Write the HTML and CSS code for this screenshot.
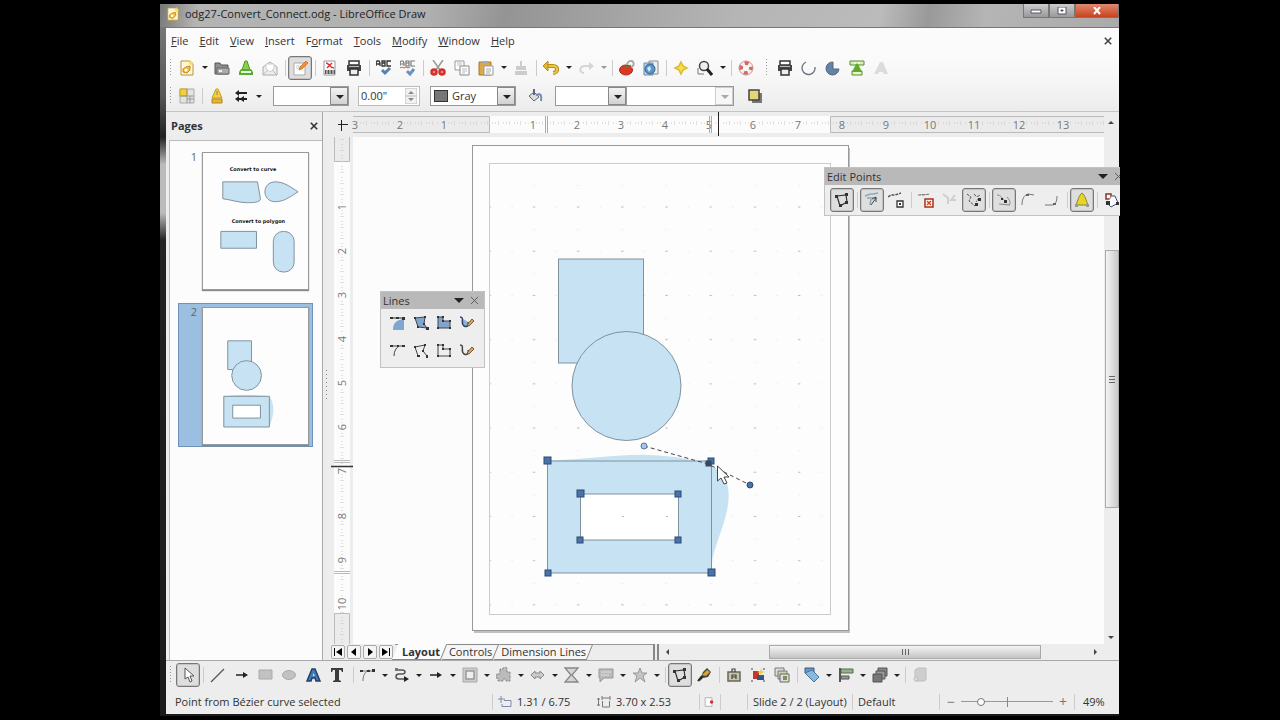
FILE: index.html
```html
<!DOCTYPE html>
<html lang="en">

<head>
    <meta charset="utf-8">
    <meta name="viewport" content="width=device-width, initial-scale=1.0">
    <title>odg27-Convert_Connect.odg - LibreOffice Draw</title>
    <link rel="stylesheet" href="styles.css">
</head>

<body>
    <svg class="defs" aria-hidden="true">
        <symbol id="i-points" viewBox="0 0 16 16">
            <path d="M3 4L12 3L13 10L6 14Z" fill="none" stroke="#333" stroke-width="1.2" />
            <path d="M1 3h3v3H1zM11 1h3v3h-3zM11 9h3v3h-3zM5 12h3v3H5z" fill="#333" />
        </symbol>
        <symbol id="i-print" viewBox="0 0 16 16">
            <path d="M3 1h10v4H3z" fill="#fff" stroke="#333" stroke-width="1.5" />
            <path d="M1 5h14v6H1z" fill="#444" />
            <path d="M3 6h10v1H3z" fill="#bbb" />
            <path d="M4 9h8v6H4z" fill="#eee" stroke="#333" stroke-width="1.5" />
        </symbol>
        <symbol id="i-doc" viewBox="0 0 16 16">
            <path d="M2 1h9l3 3v11H2z" fill="#fff8d8" stroke="#b89433" />
            <path d="M4 12V9l3-2 4-1v4l-3 3z" fill="#f0c040" stroke="#c98a14" />
            <circle cx="7" cy="10" r="1.5" fill="#fff" />
            <path d="M12 0l1 2 2 1-2 1-1 2-1-2-2-1 2-1z" fill="#ffd95a" />
        </symbol>
        <symbol id="i-close" viewBox="0 0 10 10">
            <path d="M1 1L9 9M9 1L1 9" fill="none" stroke="currentColor" />
        </symbol>
    </svg>

    <div class="window">
        <header class="titlebar">
            <svg class="doc-icon"><use href="#i-doc" /></svg>
            <span class="title">odg27-Convert_Connect.odg - LibreOffice Draw</span>
            <div class="controls">
                <button title="Minimize"><svg viewBox="0 0 12 8"><path d="M1 3h10v3H1z" fill="#fff" stroke="#556" /></svg></button>
                <button title="Maximize"><svg viewBox="0 0 12 8"><path d="M2 0h8v7H2z" fill="#fff" stroke="#556" /><path d="M5 3h2v1H5z" stroke="#556" /></svg></button>
                <button class="close" title="Close"><svg viewBox="0 0 12 8"><path d="M3 0L9 7M9 0L3 7" stroke="#fff" stroke-width="2" /></svg></button>
            </div>
        </header>

        <div class="frame">
            <nav class="menu">
                <a href="#"><u>F</u>ile</a>
                <a href="#"><u>E</u>dit</a>
                <a href="#"><u>V</u>iew</a>
                <a href="#"><u>I</u>nsert</a>
                <a href="#">F<u>o</u>rmat</a>
                <a href="#"><u>T</u>ools</a>
                <a href="#"><u>M</u>odify</a>
                <a href="#"><u>W</u>indow</a>
                <a href="#"><u>H</u>elp</a>
                <button class="close-doc" title="Close Document"><svg><use href="#i-close" /></svg></button>
            </nav>

            <div class="toolbar standard">
                <i class="grip"></i>
                <button class="tool" title="New"><svg><use href="#i-doc" /></svg></button>
                <button class="drop" title="New options"></button>
                <button class="tool" title="Open"><svg viewBox="0 0 16 16"><path d="M1 3h5l1 2h7v9H1z" fill="#8c908c" stroke="#555" /><path d="M3 8h12v6H3z" fill="#a9ada6" stroke="#666" /><path d="M5 10h3v2H5z" fill="#eee" /></svg></button>
                <button class="tool" title="Save"><svg viewBox="0 0 16 16"><path d="M7 1h2l3 9H4z" fill="#8bd04b" stroke="#4b9a1e" /><path d="M3 9L1 12v3h14v-3l-2-3z" fill="#5daa2c" /><path d="M3 12h10" stroke="#dfe" stroke-width="2" /></svg></button>
                <button class="tool" title="E-mail"><svg viewBox="0 0 16 16"><path d="M1 7l7-5 7 5v8H1z" fill="#eee" stroke="#aaa" /><path d="M4 4h8v5l-4 3-4-3z" fill="#fff" stroke="#ccc" /><path d="M1 15l5-5M15 15l-5-5" stroke="#bbb" /></svg></button>
                <i class="sep"></i>
                <button class="tool on" title="Edit File"><svg viewBox="0 0 16 16"><path d="M2 3h11v12H2z" fill="#fff" stroke="#aaa" /><path d="M4 6h5M4 8h4" stroke="#ccc" /><path d="M7 10l1-3 6-6 2 2-6 6z" fill="#f09030" stroke="#b05c10" stroke-width=".6" /></svg></button>
                <i class="sep"></i>
                <button class="tool" title="Export as PDF"><svg viewBox="0 0 16 16"><path d="M2 1h11v14H2z" fill="#fff" stroke="#999" /><path d="M4 3c3 0 4 5 8 5M5 8l5-5" fill="none" stroke="#d33" stroke-width="1.5" /><path d="M3 10h10v4H3z" fill="#555" /><path d="M5 10v4M8 10v4M11 10v4" stroke="#eee" /></svg></button>
                <button class="tool" title="Print"><svg><use href="#i-print" /></svg></button>
                <i class="sep"></i>
                <button class="tool" title="Spelling"><svg viewBox="0 0 16 16"><path d="M0 6V3l1-2h2l1 2v3M0 4h4M6 1v5h3V1zM6 3h3M15 1h-4v5h4" fill="none" stroke="#333" stroke-width="1.3" /><path d="M6 10l3 3 5-5" fill="none" stroke="#5580b0" stroke-width="3" /></svg></button>
                <button class="tool" title="AutoSpellcheck"><svg viewBox="0 0 16 16"><path d="M0 6V3l1-2h2l1 2v3M0 4h4M6 1v5h3V1zM6 3h3M15 1h-4v5h4" fill="none" stroke="#777" stroke-width="1.2" /><path d="M0 8l2-1 2 1 2-1 2 1 2-1" fill="none" stroke="#d55" /><path d="M7 11l3 3 4-5" fill="none" stroke="#6a92bf" stroke-width="3" /></svg></button>
                <i class="sep"></i>
                <button class="tool" title="Cut"><svg viewBox="0 0 16 16"><path d="M3 0l7 10M13 0L6 10" stroke="#999" stroke-width="1.5" /><circle cx="4" cy="12" r="2.5" fill="#e88" stroke="#d2312b" stroke-width="2.5" /><circle cx="12" cy="12" r="2.5" fill="#e88" stroke="#d2312b" stroke-width="2.5" /></svg></button>
                <button class="tool" title="Copy"><svg viewBox="0 0 16 16"><path d="M1 1h9v9H1z" fill="#fff" stroke="#999" /><path d="M6 6h9v9H6z" fill="#fff" stroke="#888" /><path d="M3 3h5M3 5h5M8 9h5M8 11h5M8 13h3" stroke="#bbb" /></svg></button>
                <button class="tool" title="Paste"><svg viewBox="0 0 16 16"><path d="M1 2h12v13H1z" fill="#d9a94b" stroke="#a9782a" /><path d="M4 1h6v3H4z" fill="#aaa" /><path d="M6 6h9v9H6z" fill="#fff" stroke="#999" /><path d="M8 9h5M8 11h5M8 13h4" stroke="#aaa" /></svg></button>
                <button class="drop" title="Paste options"></button>
                <button class="tool off" title="Format Paintbrush"><svg viewBox="0 0 16 16"><path d="M7 1h2v5h4v4H3V6h4zM2 11h12v4H2z" fill="#999" /></svg></button>
                <i class="sep"></i>
                <button class="tool" title="Undo"><svg viewBox="0 0 16 16"><path d="M3 6h7c6 0 5 7 0 7" fill="none" stroke="#b88d15" stroke-width="4" /><path d="M3 6h7c6 0 5 7 0 7" fill="none" stroke="#edc743" stroke-width="2" /><path d="M0 6l5-5v10z" fill="#e1b62c" stroke="#b88d15" /></svg></button>
                <button class="drop" title="Undo history"></button>
                <button class="tool off" title="Redo"><svg viewBox="0 0 16 16"><path d="M13 6H7c-6 0-6 7-1 7" fill="none" stroke="#aaa" stroke-width="2" /><path d="M16 6l-5-4v8z" fill="#aaa" /></svg></button>
                <button class="drop off" title="Redo history"></button>
                <i class="sep"></i>
                <button class="tool" title="Chart"><svg viewBox="0 0 16 16"><ellipse cx="7" cy="10" rx="6.5" ry="5" fill="#dd3826" stroke="#a7271a" /><path d="M8 5c0-3 4-6 6-3s-1 5-2 5" fill="none" stroke="#aaa" stroke-width="2" /><path d="M5 5l3 2 4-2" stroke="#4b8a2c" fill="none" /></svg></button>
                <button class="tool" title="Hyperlink"><svg viewBox="0 0 16 16"><path d="M6 1h9v13H6z" fill="#eee" stroke="#889" /><path d="M1 3h9v12H1z" fill="#b8d2ea" stroke="#6b8cab" /><circle cx="7" cy="9" r="5" fill="#5b94c8" stroke="#31648f" /><path d="M4 8l3-2 1 3-2 3z" fill="#d5e8f5" /></svg></button>
                <i class="sep"></i>
                <button class="tool" title="Navigator"><svg viewBox="0 0 16 16"><path d="M8 2l2 4 4 2-4 2-2 4-2-4-4-2 4-2z" fill="#f7dd4a" stroke="#dabb2c" stroke-width="1.5" /></svg></button>
                <button class="tool" title="Zoom"><svg viewBox="0 0 16 16"><path d="M1 8v6h6" stroke="#777" fill="none" /><circle cx="7" cy="6" r="4.5" fill="#eee" stroke="#444" stroke-width="1.5" /><path d="M10 9l5 6" stroke="#222" stroke-width="3" /></svg></button>
                <button class="drop" title="Zoom options"></button>
                <i class="sep"></i>
                <button class="tool" title="Help"><svg viewBox="0 0 16 16"><circle cx="8" cy="8" r="5" fill="none" stroke="#f3efef" stroke-width="4" /><circle cx="8" cy="8" r="5" fill="none" stroke="#d86860" stroke-width="4" stroke-dasharray="4 3.850" stroke-dashoffset="2" /><circle cx="8" cy="8" r="7" fill="none" stroke="#c99" /></svg></button>
                <i class="grip wide"></i>
                <button class="tool" title="Print Directly"><svg><use href="#i-print" /></svg></button>
                <button class="tool" title="Arc"><svg viewBox="0 0 16 16"><path d="M5 2a6.500 6.500 0 1 0 9 5" fill="none" stroke="#69727f" stroke-width="1.3" /></svg></button>
                <button class="tool" title="Ellipse Pie"><svg viewBox="0 0 16 16"><path d="M8 2a6.500 6.500 0 1 0 6 7H8z" fill="#6482a8" stroke="#55677d" /></svg></button>
                <button class="tool" title="Load Graphic"><svg viewBox="0 0 16 16"><path d="M1 1h14v4H1zM3 11h10v4H3z" fill="#d5f0b5" stroke="#57912e" /><path d="M8 2l5 10H3z" fill="#62aa2b" /><path d="M5 3h6M5 13h6" stroke="#fff" /></svg></button>
                <button class="tool off" title="Fontwork"><svg viewBox="0 0 16 16"><path d="M1 14L7 2h3l5 12h-4l-1-2H6l-1 2z" fill="#bbb" /></svg></button>
            </div>

            <div class="toolbar line-fill">
                <i class="grip"></i>
                <button class="tool" title="Styles"><svg viewBox="0 0 16 16"><path d="M1 1h14v14H1z" fill="#e3e3e3" stroke="#aaa" /><path d="M1 1h7v7H1z" fill="#f5cf35" stroke="#c9a520" /><path d="M8 1v14M1 8h14M11 8v7M8 11h7" stroke="#999" /></svg></button>
                <i class="sep"></i>
                <button class="tool" title="Line"><svg viewBox="0 0 16 16"><path d="M7 1h2l4 9H3z" fill="#f6cf3a" stroke="#c79d1c" /><path d="M8 3v4" stroke="#887" /><path d="M3 11h10v4H3z" fill="#e4b732" stroke="#b4871a" /></svg></button>
                <button class="tool" title="Arrow Style"><svg viewBox="0 0 16 16"><path d="M2 5l4-3v2h8v2H6v2zM2 11l4-3v2h2l3-2v2h3v2h-3v2l-3-2H6v2z" fill="#222" /></svg></button>
                <button class="drop" title="Arrow options"></button>
                <span class="combo line-style"><select aria-label="Line Style"><option></option></select></span>
                <span class="spin"><input type="text" aria-label="Line Width" value="0.00&quot;"><svg viewBox="0 0 12 16"><path d="M0 0h12v16H0zM0 8h12" fill="#f1f1f1" stroke="#bbb" /><path d="M3 6l3-3 3 3zM3 10l3 3 3-3z" fill="#888" /></svg></span>
                <span class="combo color"><i class="swatch"></i><select aria-label="Line Color"><option>Gray</option></select></span>
                <button class="tool area" title="Area"><svg viewBox="0 0 16 16"><path d="M2 8l5-4 5 5-5 4z" fill="#ddd" stroke="#667" /><path d="M7 7V1" stroke="#667" stroke-width="2" /><path d="M9 7c5-2 6 1 5 6" fill="none" stroke="#7686b8" stroke-width="2" /></svg></button>
                <span class="combo fill-type"><select aria-label="Area Style"><option></option></select></span>
                <span class="combo fill-value"><select aria-label="Area Filling" disabled><option></option></select></span>
                <button class="tool shadow" title="Shadow"><svg viewBox="0 0 16 16"><path d="M5 5h10v10H5z" fill="#777" /><path d="M2 2h10v10H2z" fill="#e3d674" stroke="#444" stroke-width="1.5" /></svg></button>
            </div>

            <main class="main">
                <aside class="pages">
                    <div class="pages-head">Pages <button title="Close Pane"><svg><use href="#i-close" /></svg></button></div>
                    <div class="pages-list">
                        <div class="page-item">
                            <span>1</span>
                            <svg class="thumb" viewBox="0 0 106 137">
                                <text x="27" y="18">Convert to curve</text>
                                <path d="M20 29H55L58 46C58 50 50 50 44 50C36 50 28 47 20 46Z" />
                                <path d="M96 39C88 34 82 29 73 29C59 29 59 49 73 49C82 49 88 44 96 39Z" />
                                <text x="29" y="71">Convert to polygon</text>
                                <path d="M18 79H54V96H18Z" />
                                <rect x="71" y="79" width="21" height="41" rx="10" />
                            </svg>
                        </div>
                        <div class="page-item selected">
                            <span>2</span>
                            <svg class="thumb" viewBox="0 0 106 137">
                                <path d="M25 33H49V62H25Z" />
                                <circle cx="44" cy="68" r="15" />
                                <path d="M21 89Q45 86 67 89Q75 100 67 120Z" class="soft" />
                                <path d="M21 89H67V120H21Z" />
                                <path d="M30 98H58V111H30Z" class="hole" />
                            </svg>
                        </div>
                    </div>
                </aside>
                <div class="splitter"></div>

                <section class="workspace">
                    <svg class="ruler-h">
                        <defs>
                            <pattern id="ticks-h" x="4" width="11" height="22" patternUnits="userSpaceOnUse">
                                <path d="M3 11h1M6 11h1M9 10h1M9 12h1" stroke="#c4c4c4" />
                            </pattern>
                        </defs>
                        <rect x="22" y="4" width="100%" height="17" class="active" />
                        <path d="M22 4.500H158.500V20.500H22" class="dim" />
                        <svg x="499" width="274" height="30"><path d="M.5 4.500H1400V20.500H.5Z" class="dim" /></svg>
                        <rect x="22" y="1" width="751" height="22" fill="url(#ticks-h)" />
                        <path d="M7 12.500H17M10.500 8V19" class="cross" />
                        <g class="nums">
                            <g class="outside">
                                <text x="24" y="17">3</text>
                                <text x="69" y="17">2</text>
                                <text x="113" y="17">1</text>
                            </g>
                            <text x="202" y="17">1</text>
                            <text x="246" y="17">2</text>
                            <text x="290" y="17">3</text>
                            <text x="334" y="17">4</text>
                            <text x="378" y="17">5</text>
                            <text x="422" y="17">6</text>
                            <text x="467" y="17">7</text>
                            <g class="outside">
                                <text x="511" y="17">8</text>
                                <text x="555" y="17">9</text>
                                <text x="599" y="17">10</text>
                                <text x="643" y="17">11</text>
                                <text x="688" y="17">12</text>
                                <text x="732" y="17">13</text>
                            </g>
                        </g>
                        <path d="M214.500 4V21M216.500 4V21M378.500 4V21M380.500 4V21" stroke="#aaa" />
                        <path d="M387.500 0V24" stroke="#222" />
                    </svg>

                    <div class="view">
                        <svg class="ruler-v">
                            <defs>
                                <pattern id="ticks-v" y="4" width="22" height="11" patternUnits="userSpaceOnUse">
                                    <path d="M11 3v1M11 6v1M10 9v1M12 9v1" stroke="#c4c4c4" />
                                </pattern>
                            </defs>
                            <rect x="3" y="0" width="16" height="100%" class="active" />
                            <path d="M3.500 0V24.500H18.500V0" class="dim" />
                            <path d="M3.500 520V476.500H18.500V520" class="dim" />
                            <rect width="22" height="100%" fill="url(#ticks-v)" />
                            <g class="nums">
                                <text transform="translate(15 70) rotate(-90)">1</text>
                                <text transform="translate(15 114) rotate(-90)">2</text>
                                <text transform="translate(15 158) rotate(-90)">3</text>
                                <text transform="translate(15 202) rotate(-90)">4</text>
                                <text transform="translate(15 246) rotate(-90)">5</text>
                                <text transform="translate(15 290) rotate(-90)">6</text>
                                <text transform="translate(15 334) rotate(-90)">7</text>
                                <text transform="translate(15 379) rotate(-90)">8</text>
                                <text transform="translate(15 423) rotate(-90)">9</text>
                                <text transform="translate(15 467) rotate(-90)">10</text>
                            </g>
                            <path d="M3 323.500H19M3 325.500H19M3 434.500H19M3 436.500H19" stroke="#bbb" />
                            <path d="M0 329.500H22" stroke="#333" stroke-width="1.5" />
                        </svg>

                        <svg class="canvas">
                            <defs>
                                <pattern id="grid" x="40" y="40" width="44.2" height="44.2" patternUnits="userSpaceOnUse">
                                    <path d="M21 22h2" stroke="#aaa" />
                                    <path d="M21 .5h2M0 22h1M43 22h1" stroke="#ececec" />
                                </pattern>
                            </defs>
                            <g transform="translate(119 8)">
                                <rect x="2" y="3" width="376" height="485" fill="#c0c0c0" />
                                <rect x=".5" y=".5" width="376" height="485" fill="#fdfdfd" stroke="#999" />
                                <rect x="18" y="18" width="340" height="451" fill="url(#grid)" />
                                <rect x="17.500" y="18.500" width="341" height="451" fill="none" stroke="#ccc" />
                                <g class="shape">
                                    <rect x="86.500" y="114" width="85" height="104" />
                                    <circle cx="154.500" cy="241" r="54.500" />
                                    <path d="M75 316C115 314 150 309 176 310C206 311 232 316 247 325C260 337 258 358 252 377C247 394 239 410 239 428H75Z" class="soft" />
                                    <path d="M75.500 316H239.500V428H75.500Z" />
                                    <rect x="108.500" y="349" width="98" height="46" class="hole" />
                                </g>
                                <path d="M150 371.500h2M194 371.500h2" stroke="#bbb" />
                                <path d="M172 301L236 319L278 340" class="tangent" />
                                <g class="handles">
                                    <rect x="72" y="312" width="7" height="7" />
                                    <rect x="236" y="313" width="6" height="6" />
                                    <rect x="73" y="425" width="6" height="6" />
                                    <rect x="236" y="424" width="7" height="7" />
                                    <rect x="105" y="345" width="7" height="7" />
                                    <rect x="203" y="346" width="6" height="6" />
                                    <rect x="105" y="392" width="6" height="6" />
                                    <rect x="203" y="392" width="6" height="6" />
                                    <rect x="234" y="316" width="5" height="5" class="node" />
                                    <circle cx="172" cy="301" r="3" class="light" />
                                    <circle cx="278" cy="340" r="3" />
                                </g>
                                <path d="M245.500 321V336L249 333L252 339L255 338L252 332H257Z" fill="#fff" stroke="#444" />
                            </g>
                        </svg>

                        <div class="scroll-v">
                            <button class="up" title="Scroll up"></button>
                            <div class="track"><div class="thumb-v"></div></div>
                            <button class="down" title="Scroll down"></button>
                        </div>
                    </div>

                    <div class="bottom-row">
                        <div class="tab-nav">
                            <button title="First"><svg viewBox="0 0 10 10"><path d="M1 1h1v8H1zM9 1v8L3 5z" /></svg></button>
                            <button title="Previous"><svg viewBox="0 0 10 10"><path d="M7 1v8L2 5z" /></svg></button>
                            <button title="Next"><svg viewBox="0 0 10 10"><path d="M3 1v8l5-4z" /></svg></button>
                            <button title="Last"><svg viewBox="0 0 10 10"><path d="M8 1h1v8H8zM1 1v8l6-4z" /></svg></button>
                        </div>
                        <div class="tabs">
                            <button class="tab current">Layout</button>
                            <button class="tab">Controls</button>
                            <button class="tab">Dimension Lines</button>
                        </div>
                        <div class="scroll-h">
                            <button class="left" title="Scroll left"></button>
                            <div class="track"><div class="thumb-h"></div></div>
                            <button class="right" title="Scroll right"></button>
                        </div>
                    </div>

                    <div class="palette lines">
                        <div class="palette-head">Lines <button class="drop" title="Lines menu"></button><button class="x" title="Close"><svg><use href="#i-close" /></svg></button></div>
                        <div class="palette-grid">
                            <button class="tool" title="Curve, Filled"><svg viewBox="0 0 16 16"><path d="M3 15C3 8 6 5 14 4v11z" fill="#7fa5d1" /><path d="M1 3h13" stroke="#333" /><path d="M0 2h3v2H0zM6 2h3v2H6zM12 2h3v3h-3z" fill="#333" /></svg></button>
                            <button class="tool" title="Polygon, Filled"><svg viewBox="0 0 16 16"><path d="M2 3L12 2L11 9L14 13L5 12Z" fill="#7fa5d1" stroke="#444" /><path d="M1 2h2v2H1zM11 1h2v2h-2zM10 8h2v2h-2zM13 12h3v3h-3zM4 11h2v2H4z" fill="#333" /></svg></button>
                            <button class="tool" title="Polygon (45°), Filled"><svg viewBox="0 0 16 16"><path d="M2 2h5v4h7v7H2z" fill="#7fa5d1" stroke="#444" /><path d="M1 1h2v2H1zM6 1h2v2H6zM6 5h2v2H6zM13 5h2v2h-2zM1 12h2v2H1zM13 12h2v2h-2z" fill="#333" /></svg></button>
                            <button class="tool" title="Freeform Line, Filled"><svg viewBox="0 0 16 16"><path d="M1 2c5 0 0 6 4 9 4 2 5-2 4-4" fill="#8eb1d8" stroke="#346" stroke-width="1.5" /><path d="M8 10l5-6 2 2-5 5z" fill="#d8aa65" stroke="#775a30" /></svg></button>
                            <button class="tool" title="Curve"><svg viewBox="0 0 16 16"><path d="M4 13C4 8 6 5 9 3M1 3h13" stroke="#444" fill="none" /><path d="M0 2h3v2H0zM7 2h2v2H7zM12 2h3v2h-3z" fill="#333" /></svg></button>
                            <button class="tool" title="Polygon"><svg viewBox="0 0 16 16"><path d="M5 13L2 4L12 2L10 8L14 13" fill="none" stroke="#444" /><path d="M4 12h3v2H4zM1 3h2v2H1zM11 1h2v2h-2zM9 7h2v2H9zM13 12h2v3h-2z" fill="#333" /></svg></button>
                            <button class="tool" title="Polygon (45°)"><svg viewBox="0 0 16 16"><path d="M2 2h5v4h7v7H2z" fill="none" stroke="#444" /><path d="M1 1h2v2H1zM6 1h2v2H6zM6 5h2v2H6zM13 5h2v2h-2zM1 12h2v2H1zM13 12h2v2h-2z" fill="#333" /></svg></button>
                            <button class="tool" title="Freeform Line"><svg viewBox="0 0 16 16"><path d="M1 2c5 0 0 6 4 9 4 2 5-2 4-4" fill="none" stroke="#444" stroke-width="1.5" /><path d="M8 10l5-6 2 2-5 5z" fill="#d8aa65" stroke="#775a30" /></svg></button>
                        </div>
                    </div>

                    <div class="palette edit-points">
                        <div class="palette-head">Edit Points <button class="drop" title="Edit Points menu"></button><button class="x" title="Close"><svg><use href="#i-close" /></svg></button></div>
                        <div class="palette-row">
                            <button class="tool on" title="Points"><svg><use href="#i-points" /></svg></button>
                            <i class="sep"></i>
                            <button class="tool on" title="Move Points"><svg viewBox="0 0 16 16"><path d="M1 4l5-2h3l5-1M3 6h9M6 13l1-6" stroke="#8ab" fill="none" stroke-width="1.5" /><path d="M7 13l5-7M12 10V5l-4 2" fill="none" stroke="#444" /></svg></button>
                            <button class="tool" title="Insert Points"><svg viewBox="0 0 16 16"><path d="M0 5l3-2h4l6-2" stroke="#555" fill="none" stroke-dasharray="3 1" stroke-width="1.5" /><path d="M9 9h6v6H9z" fill="#fff" stroke="#333" stroke-width="1.3" /><path d="M11 11h2v2h-2z" fill="#333" /></svg></button>
                            <i class="sep"></i>
                            <button class="tool" title="Delete Points"><svg viewBox="0 0 16 16"><path d="M0 3h5l7-1" stroke="#777" stroke-dasharray="3 1" /><path d="M7 7h8v8H7z" fill="#fff" stroke="#a5321c" stroke-width="1.5" /><path d="M9 9l4 4M13 9l-4 4" stroke="#e04020" stroke-width="1.5" /></svg></button>
                            <button class="tool off" title="Split Curve"><svg viewBox="0 0 16 16"><path d="M1 2l5 4v6M13 3l-4 5h5" fill="none" stroke="#aaa" stroke-width="2" /></svg></button>
                            <button class="tool on" title="Convert To Curve"><svg viewBox="0 0 16 16"><path d="M1 2l4 3-2 4 6 5M8 2c2 3 4 3 6 1M13 6l-3 4" fill="none" stroke="#555" stroke-dasharray="3 1" /><path d="M12 6h3v3h-3zM9 11h3v3H9z" fill="#333" /></svg></button>
                            <i class="sep"></i>
                            <button class="tool on" title="Corner Point"><svg viewBox="0 0 16 16"><path d="M1 3c4 0 5 3 8 6M11 5c3 3 4 6 2 8M3 12l11 1" fill="none" stroke="#888" /><path d="M5 6h2v2H5zM8 8h3v3H8z" fill="#333" /></svg></button>
                            <button class="tool" title="Smooth Transition"><svg viewBox="0 0 16 16"><path d="M2 13C2 7 4 3 8 2l6 1" fill="none" stroke="#777" /><path d="M6 2h3v2H6z" fill="#666" /></svg></button>
                            <button class="tool" title="Symmetric Transition"><svg viewBox="0 0 16 16"><path d="M1 13h7c3 0 5-3 5-9" fill="none" stroke="#777" /><path d="M9 11h3v2H9z" fill="#666" /></svg></button>
                            <i class="sep"></i>
                            <button class="tool on" title="Close Bézier"><svg viewBox="0 0 16 16"><path d="M8 1c3 2 4 7 6 12H2C4 8 5 3 8 1z" fill="#e6d626" stroke="#8a8330" /><path d="M1 12h3v3H1zM12 12h3v3h-3z" fill="#999" /></svg></button>
                            <i class="sep"></i>
                            <button class="tool" title="Eliminate Points"><svg viewBox="0 0 16 16"><path d="M2 2h5v5H2z" fill="#fff" stroke="#833" stroke-width="1.5" /><path d="M8 4h3l3 7-7 4-4-4" fill="#fff" stroke="#357" /><path d="M2 9h4v4H2zM12 10h3v3h-3z" fill="#333" /></svg></button>
                        </div>
                    </div>
                </section>
            </main>

            <div class="toolbar drawing">
                <i class="grip"></i>
                <button class="tool on" title="Select"><svg viewBox="0 0 16 16"><path d="M5 1v11l3-2 2 5 2-1-2-5h4z" fill="#fff" stroke="#555" /></svg></button>
                <i class="sep"></i>
                <button class="tool" title="Line"><svg viewBox="0 0 16 16"><path d="M1 15L14 2" stroke="#555" stroke-width="1.3" /></svg></button>
                <button class="tool" title="Line Ends with Arrow"><svg viewBox="0 0 16 16"><path d="M2 8h9" stroke="#222" stroke-width="1.5" /><path d="M9 5l5 3-5 3z" fill="#222" /></svg></button>
                <button class="tool" title="Rectangle"><svg viewBox="0 0 16 16"><path d="M1 3h13v9H1z" fill="#c2c2c2" stroke="#aaa" /></svg></button>
                <button class="tool" title="Ellipse"><svg viewBox="0 0 16 16"><ellipse cx="7" cy="8" rx="6.5" ry="4.5" fill="#c2c2c2" stroke="#aaa" /></svg></button>
                <button class="tool" title="Fontwork Gallery"><svg viewBox="0 0 16 16"><path d="M1 14L6 2h3l5 12h-4l-1-3H6l-1 3z" fill="#4579b5" stroke="#233f63" stroke-width="1.5" /><path d="M7 9l.5-3 1 3z" fill="#fff" /></svg></button>
                <button class="tool" title="Text"><svg viewBox="0 0 16 16"><path d="M1 1h12v4h-1l-1-2H9v10l2 1v1H3v-1l2-1V3H3L2 5H1z" fill="#3c3c3c" /></svg></button>
                <i class="sep"></i>
                <button class="tool" title="Curve"><svg viewBox="0 0 16 16"><path d="M3 14C3 8 5 5 9 3M1 4h13" fill="none" stroke="#777" /><path d="M0 3h3v2H0zM7 3h3v2H7zM12 2h3v3h-3z" fill="#333" /></svg></button>
                <button class="drop" title="Curve options"></button>
                <button class="tool" title="Connector"><svg viewBox="0 0 16 16"><path d="M2 3h6c4 0 4 4 0 4H5c-4 0-4 5 0 5h6" fill="none" stroke="#555" stroke-width="1.5" /><path d="M1 1h3v3H1z" fill="#777" /><path d="M10 9l5 3-5 3z" fill="#222" /></svg></button>
                <button class="drop" title="Connector options"></button>
                <button class="tool" title="Lines and Arrows"><svg viewBox="0 0 16 16"><path d="M2 8h9" stroke="#222" stroke-width="1.5" /><path d="M9 5l5 3-5 3z" fill="#222" /></svg></button>
                <button class="drop" title="Arrow options"></button>
                <button class="tool" title="3D Objects"><svg viewBox="0 0 16 16"><path d="M1 1h14v14H1z" fill="#ccc" stroke="#aaa" /><path d="M4 4h8v8H4z" fill="#eee" stroke="#999" stroke-width="1.5" /></svg></button>
                <button class="drop" title="3D options"></button>
                <button class="tool" title="Basic Shapes"><svg viewBox="0 0 16 16"><path d="M4 4V2h3a2 2 0 0 1 4 0v3h3v9h-4v-2H7v2H2v-3H0V7h4z" fill="#bbb" stroke="#888" stroke-dasharray="3 1" /></svg></button>
                <button class="drop" title="Shape options"></button>
                <button class="tool" title="Block Arrows"><svg viewBox="0 0 16 16"><path d="M1 8l4-4v2h5V4l4 4-4 4v-2H5v2z" fill="#ccc" stroke="#888" /></svg></button>
                <button class="drop" title="Block arrow options"></button>
                <button class="tool" title="Flowcharts"><svg viewBox="0 0 16 16"><path d="M1 1h13L8 8l6 7H1l6-7z" fill="#d4d4d4" stroke="#888" stroke-width="1.3" /></svg></button>
                <button class="drop" title="Flowchart options"></button>
                <button class="tool" title="Callouts"><svg viewBox="0 0 16 16"><path d="M1 2h14v9H6l-4 4v-4H1z" fill="#bbb" stroke="#999" /><path d="M3 5h10M3 8h8" stroke="#ddd" /></svg></button>
                <button class="drop" title="Callout options"></button>
                <button class="tool" title="Stars"><svg viewBox="0 0 16 16"><path d="M8 1l2 5h5l-4 3 2 6-5-4-5 4 2-6-4-3h5z" fill="#c5c5c5" stroke="#999" /></svg></button>
                <button class="drop" title="Star options"></button>
                <i class="sep"></i>
                <button class="tool on" title="Points"><svg><use href="#i-points" /></svg></button>
                <button class="tool" title="Glue Points"><svg viewBox="0 0 16 16"><path d="M7 5l4-4 4 4-3 5-5 1-4 4 2-5z" fill="#444" /><path d="M6 8l5-5 3 2-4 4z" fill="#e0a032" /><path d="M2 14l4-5" stroke="#222" stroke-width="2" /></svg></button>
                <i class="sep"></i>
                <button class="tool" title="Fontwork"><svg viewBox="0 0 16 16"><path d="M2 5h12v9H2z" fill="#c9c6a0" stroke="#666" stroke-width="1.5" /><path d="M6 5V2h3v3M6 12V8h4v4M6 10h4" fill="none" stroke="#444" stroke-width="1.2" /></svg></button>
                <button class="tool" title="From File"><svg viewBox="0 0 16 16"><path d="M3 4h6v8H3z" fill="#cc3328" /><path d="M7 8h7v5H7z" fill="#2f568f" /><path d="M11 1l1 3 3 1-3 1-1 3-1-3-3-1 3-1z" fill="#f0d040" /><path d="M1 1h2v2H1zM13 1h2v2h-2zM1 13h2v2H1zM13 13h2v2h-2z" fill="#999" /></svg></button>
                <button class="tool" title="Gallery"><svg viewBox="0 0 16 16"><path d="M1 1h9v8H1z" fill="#ddd" stroke="#777" /><path d="M4 4h9v8H4z" fill="#ccd4a5" stroke="#777" /><path d="M6 7h9v8H6z" fill="#ddd" stroke="#666" /><path d="M9 9h4v4H9z" fill="#799251" /></svg></button>
                <i class="sep"></i>
                <button class="tool" title="Rotate"><svg viewBox="0 0 16 16"><path d="M1 1h9v5H1z" fill="#629ccb" stroke="#457" /><path d="M1 6l7-3 7 7-5 5z" fill="#8ab9e0" stroke="#4674a0" /></svg></button>
                <button class="drop" title="Rotate options"></button>
                <button class="tool" title="Alignment"><svg viewBox="0 0 16 16"><path d="M2 1v14" stroke="#222" stroke-width="1.5" /><path d="M3 2h12v4H3z" fill="#94b18c" stroke="#5b6b57" /><path d="M3 9h8v3H3z" fill="#999" stroke="#555" /></svg></button>
                <button class="drop" title="Alignment options"></button>
                <button class="tool" title="Arrange"><svg viewBox="0 0 16 16"><path d="M6 1h9v8H6z" fill="#888" stroke="#555" /><path d="M4 4h9v8H4z" fill="#999" stroke="#555" /><path d="M1 7h9v8H1z" fill="#777" stroke="#555" /></svg></button>
                <button class="drop" title="Arrange options"></button>
                <i class="sep"></i>
                <button class="tool off" title="Extrusion"><svg viewBox="0 0 16 16"><path d="M3 3l3-2h8v12l-2 1H3z" fill="#aaa" stroke="#888" /><circle cx="4" cy="12" r="2" fill="#ccc" stroke="#888" /></svg></button>
            </div>

            <footer class="status">
                <span class="message">Point from Bézier curve selected</span>
                <span class="cell position"><svg viewBox="0 0 14 12"><path d="M0 3h7M3 0v7M6 4.500h7v6H4V8" fill="none" stroke="#8089a8" /></svg>1.31 / 6.75</span>
                <span class="cell size"><svg viewBox="0 0 14 12"><path d="M1.500 2v8M0 3h3M0 9h3M5 2h8M5 0v4M13 0v4M5.500 5v6h7V5" fill="none" stroke="#777" /></svg>3.70 x 2.53</span>
                <span class="cell modified"><svg viewBox="0 0 14 12"><path d="M2.500 1v10h8V1z" fill="#fff" stroke="#aaa" /><circle cx="10" cy="6" r="2" fill="#c33" /></svg></span>
                <span class="cell blank"></span>
                <span class="cell slide">Slide 2 / 2 (Layout)</span>
                <span class="cell style">Default</span>
                <span class="cell zoom">
                    <button title="Zoom Out">&minus;</button>
                    <input type="range" aria-label="Zoom" min="0" max="100" value="19">
                    <button title="Zoom In">+</button>
                </span>
                <span class="cell percent">49%</span>
            </footer>
        </div>
    </div>
</body>

</html>
```

FILE: styles.css
```css
* {
    box-sizing: border-box;
}

body {
    margin: 0;
    background: #000;
    color: #333;
    font: 11px/16px "Open Sans", "Noto Sans", sans-serif;
}

button {
    display: flex;
    align-items: center;
    justify-content: center;
    flex: none;
    padding: 0;
    border: 0;
    background: none;
    color: inherit;
    font: inherit;
}

.defs {
    position: absolute;
    width: 0;
    height: 0;
}

.window {
    display: flex;
    flex-direction: column;
    width: 75%;
    height: 100vh;
    margin: 0 auto;
    padding: 4px 1px 4px 0;
    overflow: hidden;
    background: #000;
}

/* title bar */
.titlebar {
    display: flex;
    align-items: center;
    flex: none;
    height: 24px;
    padding: 0 0 4px 6px;
    border-bottom: 1px solid #777;
    background: linear-gradient(100deg, #777 0, #b4b4b4 4%, #b0b0b0 28%, #949494 36%, #b5b5b5 60%, #bbb 75%, #999 80%, #b5b5b5 86%, #aaa 100%);
}

.doc-icon {
    width: 14px;
    height: 14px;
    margin-right: 5px;
}

.title {
    flex: 1;
    color: #222;
}

.controls {
    display: flex;
    align-self: flex-start;
}

.controls button {
    width: 26px;
    height: 14px;
    border: 1px solid #777;
    border-top: 0;
    background: linear-gradient(#ccc, #999);
}

.controls .close {
    width: 44px;
    background: linear-gradient(#e08a70, #c9421c);
}

.controls svg {
    width: 12px;
    height: 8px;
}

.frame {
    display: flex;
    flex-direction: column;
    flex: 1;
    min-height: 0;
    border-left: 6px solid;
    border-bottom: 2px solid #555;
    border-image: linear-gradient(#777 0, #555 10%, #222 16%, #bbb 20%, #bbb 27%, #222 31%, #1a1a1a 100%) 1 / 0 0 2px 6px;
    background: #ededed;
}

/* menu and toolbars */
.menu {
    display: flex;
    align-items: center;
    gap: 11px;
    height: 26px;
    padding: 0 7px 0 5px;
    background: #fbfbfb;
}

.menu a {
    color: #333;
    text-decoration: none;
}

.close-doc {
    margin-left: auto;
    color: #444;
}

.close-doc svg,
.pages-head svg {
    width: 8px;
    height: 8px;
    stroke-width: 2;
}

.toolbar {
    display: flex;
    align-items: center;
    flex: none;
    padding-left: 3px;
}

.standard {
    height: 27px;
    background: linear-gradient(#fbfbfb, #f6f6f6);
}

.line-fill {
    height: 31px;
    border-bottom: 1px solid #c4c4c4;
    background: linear-gradient(#f6f6f6, #ececec);
}

.tool {
    width: 24px;
    height: 24px;
}

.tool svg {
    width: 16px;
    height: 16px;
}

.tool.on {
    border: 1px solid #777;
    border-radius: 3px;
    background: #dedede;
    box-shadow: inset 0 0 0 1px #c4c4c4;
}

.off {
    opacity: .45;
}

.drop {
    width: 11px;
    height: 20px;
}

.drawing .drop {
    width: 10px;
}

.drop::after,
.combo::after {
    content: "";
    border: 3px solid transparent;
    border-top: 3px solid #222;
    border-bottom: 0;
}

.sep {
    flex: none;
    width: 6px;
    height: 16px;
    background: linear-gradient(#ccc, #ccc) center / 1px 100% no-repeat;
}

.grip {
    flex: none;
    width: 6px;
    height: 18px;
    background: repeating-linear-gradient(#999 0 1px, transparent 1px 3px) 1px 0 / 1px 100% no-repeat;
}

.grip.wide {
    width: 15px;
    background-position: 8px 0;
}

.drawing .grip {
    width: 7px;
}

.combo {
    position: relative;
    display: flex;
    height: 20px;
    border: 1px solid #999;
    background: #fff;
}

.combo select {
    width: 100%;
    padding: 0 4px;
    border: 0;
    background: none;
    color: #333;
    font: inherit;
    appearance: none;
}

.combo::before {
    content: "";
    position: absolute;
    right: 0;
    top: 0;
    bottom: 0;
    width: 16px;
    border: 1px solid #888;
    background: linear-gradient(#f3f3f3, #d2d2d2);
    pointer-events: none;
}

.combo::after {
    position: absolute;
    right: 4px;
    top: 8px;
    border-width: 4px 4px 0;
    pointer-events: none;
}

.line-style {
    width: 76px;
    margin: 0 9px;
}

.spin {
    display: flex;
    align-items: center;
    width: 62px;
    height: 20px;
    margin-right: 10px;
    padding-right: 2px;
    border: 1px solid #bbb;
    background: #fff;
}

.spin input {
    flex: 1;
    min-width: 0;
    padding: 0 2px;
    border: 0;
    background: none;
    color: #333;
    font: inherit;
}

.spin svg {
    width: 12px;
    height: 16px;
}

.color {
    align-items: center;
    width: 86px;
}

.swatch {
    flex: none;
    width: 14px;
    height: 12px;
    margin-left: 3px;
    border: 1px solid #333;
    background: #777;
}

.area {
    margin: 0 8px 0 7px;
}

.fill-type {
    width: 72px;
}

.fill-value {
    width: 107px;
    border-left: 0;
}

.fill-value::before {
    border-color: #ccc;
    background: #f7f7f7;
}

.fill-value::after {
    border-top-color: #aaa;
}

.shadow {
    margin-left: 9px;
}

/* pages pane */
.main {
    display: flex;
    flex: 1;
    min-height: 0;
}

.pages {
    display: flex;
    flex-direction: column;
    width: 157px;
    padding-left: 3px;
    border-right: 1px solid #aaa;
}

.pages-head {
    display: flex;
    align-items: center;
    justify-content: space-between;
    height: 28px;
    padding: 0 4px 0 2px;
    font-weight: bold;
}

.pages-list {
    display: flex;
    flex-direction: column;
    gap: 11px;
    flex: 1;
    padding: 7px 8px;
    border: 1px solid #bbb;
    border-right: 0;
    border-bottom: 0;
    background: #fcfcfc;
}

.page-item {
    display: flex;
    justify-content: flex-end;
    gap: 5px;
    width: 135px;
    height: 144px;
    padding: 3px;
    border: 1px solid transparent;
    line-height: 10px;
    color: #666;
}

.page-item.selected {
    border-color: #6f93b8;
    background: #9abfe0;
}

.thumb {
    flex: none;
    width: 107px;
    height: 138px;
    border: 1px solid #999;
    background: #fdfdfd;
    box-shadow: 0 1px 1px #888;
}

.thumb path,
.thumb rect,
.thumb circle,
.shape {
    fill: #c7e2f2;
    stroke: #7f929e;
}

.thumb text {
    font: bold 5px "DejaVu Sans", sans-serif;
    fill: #111;
}

.thumb .soft,
.soft {
    stroke: none;
}

.thumb .hole,
.hole {
    fill: #fff;
}

.splitter {
    width: 8px;
    background: repeating-linear-gradient(#888 0 1px, transparent 1px 4px) 3px 50% / 1px 32px no-repeat;
}

/* drawing area */
.workspace {
    position: relative;
    display: flex;
    flex-direction: column;
    flex: 1;
    min-width: 0;
}

.ruler-h {
    flex: none;
    width: 100%;
    height: 25px;
}

.active {
    fill: #fcfcfc;
}

.dim {
    fill: #ebebeb;
    stroke: #bbb;
}

.cross {
    stroke: #222;
}

/* the halo hides the ticks behind each number */
.nums {
    font-size: 11px;
    fill: #777;
    text-anchor: middle;
    stroke: #fcfcfc;
    stroke-width: 4px;
    paint-order: stroke;
}

.outside {
    stroke: #ebebeb;
}

.view {
    display: flex;
    flex: 1;
    min-height: 0;
}

.ruler-v {
    flex: none;
    width: 22px;
    height: 100%;
}

.canvas {
    flex: 1;
    min-width: 0;
    height: 100%;
    background: #fcfcfc;
}

.tangent {
    fill: none;
    stroke: #445;
    stroke-dasharray: 4 3;
}

.handles {
    fill: #4a74a8;
    stroke: #2b4a75;
}

.handles .light {
    fill: #a5c6e8;
    stroke: #57789b;
}

.handles .node {
    fill: #444;
}

.scroll-v {
    display: flex;
    flex-direction: column;
    width: 15px;
    margin-top: -22px;
    background: #ededed;
}

.scroll-v .track {
    flex: 1;
    padding-top: 121px;
}

.thumb-v {
    height: 258px;
    margin-left: 1px;
    border: 1px solid #aaa;
    background: repeating-linear-gradient(#666 0 1px, transparent 1px 3px) center / 6px 7px no-repeat, linear-gradient(90deg, #f4f4f4, #c9c9c9);
}

.scroll-v button,
.scroll-h button {
    width: 14px;
    height: 14px;
}

.scroll-v .up::after {
    content: "";
    border: 3px solid transparent;
    border-top: 0;
    border-bottom-color: #444;
}

.scroll-v .down::after {
    content: "";
    border: 3px solid transparent;
    border-top-color: #444;
    border-bottom: 0;
}

.scroll-h .left::after {
    content: "";
    border: 3px solid transparent;
    border-left: 0;
    border-right-color: #444;
}

.scroll-h .right::after {
    content: "";
    border: 3px solid transparent;
    border-left-color: #444;
    border-right: 0;
}

.bottom-row {
    display: flex;
    flex: none;
    height: 16px;
}

.tab-nav {
    display: flex;
    gap: 2px;
    align-items: center;
}

.tab-nav button {
    width: 14px;
    height: 14px;
    border: 1px solid #aaa;
    border-radius: 2px;
    background: #f5f5f5;
}

.tab-nav svg {
    width: 10px;
    height: 10px;
}

.tabs {
    display: flex;
    width: 264px;
    margin-left: 2px;
    border-right: 6px double #888;
    box-shadow: inset 0 1px #999;
}

.tab {
    position: relative;
    z-index: 0;
    height: 16px;
    padding: 0 5px 0 4px;
}

.tab::before {
    content: "";
    position: absolute;
    z-index: -1;
    inset: 0 1px 0 0;
    border: 1px solid #888;
    border-left: 0;
    background: #f6f6f6;
    transform: skewX(-22deg);
}

.tab.current {
    padding-left: 7px;
    font-weight: bold;
}

.tab.current::before {
    border-top: 0;
    background: #fcfcfc;
}

.scroll-h {
    display: flex;
    align-items: center;
    flex: 1;
    padding: 0 17px 0 1px;
}

.scroll-h .track {
    flex: 1;
    padding-left: 95px;
}

.thumb-h {
    width: 272px;
    height: 14px;
    border: 1px solid #aaa;
    background: repeating-linear-gradient(90deg, #666 0 1px, transparent 1px 3px) center / 7px 6px no-repeat, linear-gradient(#f4f4f4, #c4c4c4);
}

/* floating toolbars */
.palette {
    position: absolute;
    border: 1px solid #c2c2c2;
    background: #eee;
}

.palette-head {
    display: flex;
    align-items: center;
    height: 17px;
    padding: 0 5px 0 2px;
    background: #b9b9b9;
}

.palette-head .drop {
    margin-left: auto;
}

.palette-head .drop::after {
    border-width: 5px 5px 0;
}

.palette-head .x {
    margin-left: 6px;
    color: #555;
}

.palette-head .x svg {
    width: 9px;
    height: 9px;
}

.lines {
    left: 49px;
    top: 179px;
    width: 105px;
}

.palette-grid {
    display: grid;
    grid-template-columns: repeat(4, 23px);
    row-gap: 4px;
    padding: 2px 5px 4px;
}

.edit-points {
    right: -10px;
    top: 55px;
    width: 305px;
}

.palette-row {
    display: flex;
    align-items: center;
    height: 30px;
    padding-left: 5px;
}

.drawing {
    height: 29px;
    border-top: 1px solid #aaa;
}

/* status bar */
.status {
    display: flex;
    flex: none;
    align-items: center;
    height: 25px;
    padding-left: 9px;
}

.message {
    flex: 1;
}

.cell {
    display: flex;
    align-items: center;
    flex: none;
    height: 16px;
    padding-left: 5px;
    border-left: 1px solid #ccc;
    white-space: nowrap;
}

.cell svg {
    width: 14px;
    height: 12px;
    margin-right: 5px;
}

.position {
    width: 100px;
}

.size {
    width: 107px;
    border: 0;
}

.modified {
    width: 21px;
    padding-left: 3px;
}

.blank {
    width: 27px;
}

.slide {
    width: 105px;
}

.style {
    width: 87px;
}

.zoom {
    width: 135px;
    gap: 4px;
}

.zoom button {
    width: 12px;
    height: 16px;
    color: #777;
    font-size: 14px;
}

.zoom input {
    width: 92px;
    height: 12px;
    margin: 0;
    appearance: none;
    background: linear-gradient(#888, #888) center / 1px 10px no-repeat, linear-gradient(#999, #999) center / 100% 1px no-repeat;
}

.zoom input::-webkit-slider-thumb {
    appearance: none;
    width: 8px;
    height: 8px;
    border: 1px solid #777;
    border-radius: 50%;
    background: #fff;
}

.percent {
    width: 45px;
    padding-left: 8px;
}
```
